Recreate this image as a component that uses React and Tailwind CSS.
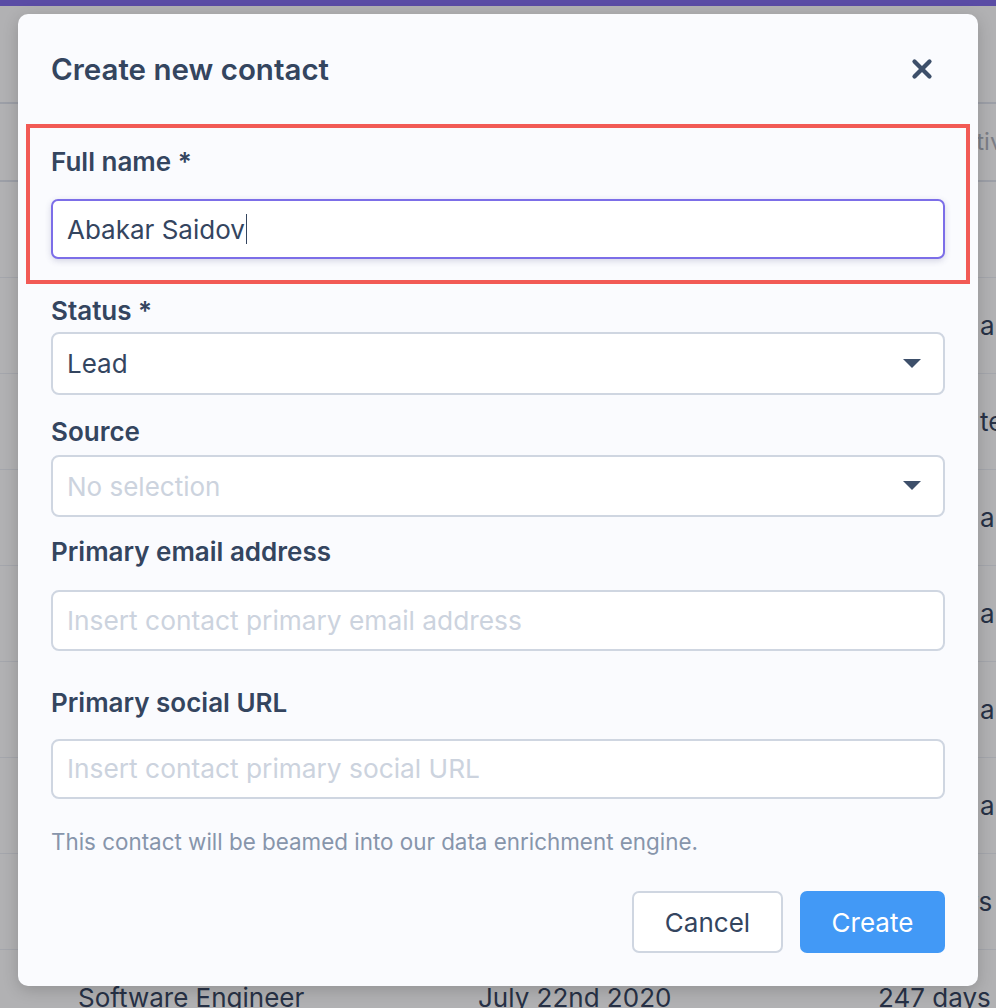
import { X } from "lucide-react";

const rows = [
  { title: "Product Manager", date: "May 3rd 2020", age: "", last: "" },
  { title: "Designer", date: "June 1st 2020", age: "", last: "a day ago" },
  { title: "Sales Lead", date: "June 9th 2020", age: "", last: "ten days ago" },
  { title: "CTO", date: "June 12th 2020", age: "", last: "a week ago" },
  { title: "Engineer", date: "June 20th 2020", age: "", last: "a month ago" },
  { title: "Founder", date: "July 2nd 2020", age: "", last: "a day ago" },
  { title: "Recruiter", date: "July 9th 2020", age: "", last: "a week ago" },
  { title: "Marketing", date: "July 15th 2020", age: "254 days", last: "" },
  { title: "Software Engineer", date: "July 22nd 2020", age: "247 days", last: "" },
];

function Caret() {
  return (
    <svg width="18" height="10" viewBox="0 0 18 10" className="shrink-0">
      <path d="M0 0 L18 0 L9 9 Z" fill="#3d4f6a" />
    </svg>
  );
}

function Label({ children, className }) {
  return (
    <div className={"text-[26px] leading-[28px] font-semibold text-[#34455f] " + className}>
      {children}
    </div>
  );
}

function App() {
  return (
    <div
      className="relative w-full h-[1008px] overflow-hidden bg-[#b1b1b3]"
      style={{ fontFamily: "Inter, Roboto, 'Liberation Sans', sans-serif" }}
    >
      {/* page behind the overlay */}
      <div className="h-[6px] bg-[#5a4ca5]" />
      <div className="h-[98px] border-b-2 border-[#9c9fa7]" />
      <div className="h-[78px] border-b-2 border-[#9c9fa7] flex items-center pl-[980px] text-[24px] text-[#7b7e86] whitespace-nowrap">
        <span className="-ml-[34px]">Activity</span>
      </div>
      {rows.map((r, i) => (
        <div
          key={i}
          className="h-[96px] border-b border-[#a4a6ac] grid grid-cols-[400px_400px_102px_200px] items-center pl-[78px] text-[26px] text-[#273146] whitespace-nowrap"
        >
          <span>{r.title}</span>
          <span>{r.date}</span>
          <span>{r.age}</span>
          <span>{r.last}</span>
        </div>
      ))}

      {/* modal */}
      <div className="absolute left-[18px] top-[14px] w-[960px] bg-[#fafbfe] rounded-[10px] shadow-[0_4px_16px_rgba(0,0,0,0.18)] px-[33px] pb-[33px]">
        <div className="h-[110px] flex items-center justify-between">
          <h2 className="text-[29.5px] font-semibold text-[#34455f]">Create new contact</h2>
          <X size={30} strokeWidth={3.4} color="#3d4f6a" className="mr-[8px]" />
        </div>

        <div className="-mx-[25px] border-[4px] border-[#f25a55] px-[21px] pt-[20px] pb-[21px]">
          <Label>Full name *</Label>
          <div className="mt-[23px] h-[60px] bg-white border-2 border-[#7c6ee8] rounded-[7px] shadow-[0_2px_6px_rgba(60,60,120,0.2)] flex items-center px-[14px] text-[26px] text-[#34455f]">
            Abakar Saidov
            <span className="w-[1.5px] h-[30px] bg-[#34455f] ml-[1px]" />
          </div>
        </div>

        <Label className="mt-[13px]">Status *</Label>
        <div className="mt-[7px] h-[63px] bg-white border-2 border-[#cfd6e1] rounded-[8px] flex items-center justify-between pl-[14px] pr-[22px] text-[26px] text-[#34455f]">
          Lead
          <Caret />
        </div>

        <Label className="mt-[23px]">Source</Label>
        <div className="mt-[9px] h-[62px] bg-white border-2 border-[#cfd6e1] rounded-[8px] flex items-center justify-between pl-[14px] pr-[22px] text-[26px] text-[#ccd3de]">
          No selection
          <Caret />
        </div>

        <Label className="mt-[21px]">Primary email address</Label>
        <div className="mt-[24px] h-[61px] bg-white border-2 border-[#cfd6e1] rounded-[8px] flex items-center pl-[14px] text-[26.3px] text-[#ccd3de]">
          Insert contact primary email address
        </div>

        <Label className="mt-[38px]">Primary social URL</Label>
        <div className="mt-[22px] h-[60px] bg-white border-2 border-[#cfd6e1] rounded-[8px] flex items-center pl-[14px] text-[26.3px] text-[#ccd3de]">
          Insert contact primary social URL
        </div>

        <p className="mt-[29px] text-[22.4px] leading-[28px] text-[#8795ab]">
          This contact will be beamed into our data enrichment engine.
        </p>

        <div className="mt-[35px] flex justify-end gap-[17px]">
          <button className="w-[151px] h-[62px] bg-white border-2 border-[#cfd6e1] rounded-[7px] text-[26px] text-[#34455f]">
            Cancel
          </button>
          <button className="w-[145px] h-[62px] bg-[#4299f6] rounded-[7px] text-[26px] text-white">
            Create
          </button>
        </div>
      </div>
    </div>
  );
}

export default App;
